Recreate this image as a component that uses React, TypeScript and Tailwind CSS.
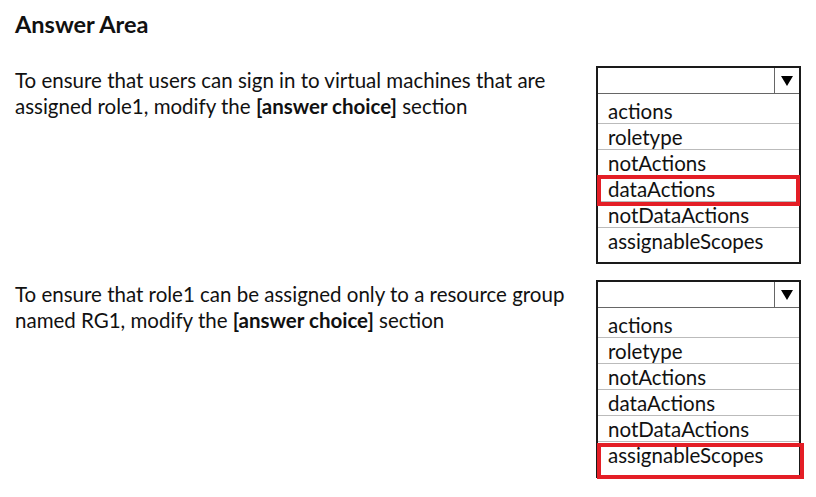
import React from "react";

const options = ["actions", "roletype", "notActions", "dataActions", "notDataActions", "assignableScopes"];

function Dropdown({ picked }: { picked: string }) {
  return (
    <div className="w-[205px] h-[198px] border-2 border-[#1a1a1a] bg-white shrink-0">
      {/* closed select header */}
      <div className="h-[26px] flex border-b border-[#666]">
        <div className="flex-1" />
        <div className="w-[25px] border-l border-[#666] flex items-center justify-center">
          <svg width="12" height="10" viewBox="0 0 12 10">
            <polygon points="0,0 12,0 6,10" fill="#000" />
          </svg>
        </div>
      </div>
      {/* option list */}
      <div className="pt-[4px]">
        {options.map((o, i) => {
          const last = i === options.length - 1;
          return (
            <div
              key={o}
              className={`relative h-[26px] pl-[10px] text-[20.5px] leading-[26px] ${
                last ? "" : "border-b border-[#bbb]"
              }`}
            >
              {o}
              {o === picked &&
                (last ? (
                  <div className="absolute left-[-1px] right-[-5px] top-[1px] h-[36px] border-4 border-[#e41e26]" />
                ) : (
                  <div className="absolute left-[-1px] right-[-1px] top-[-1px] h-[31px] border-4 border-[#e41e26]" />
                ))}
            </div>
          );
        })}
      </div>
    </div>
  );
}

function Question({ lines, picked }: { lines: [string, string]; picked: string }) {
  return (
    <div className="flex justify-between">
      <p className="pt-[1px] text-[20.5px] leading-[26px]">
        {lines[0]}
        <br />
        {lines[1]} <b>[answer choice]</b> section
      </p>
      <Dropdown picked={picked} />
    </div>
  );
}

export default function App() {
  return (
    <div
      className="w-[816px] h-[497px] bg-white text-[#111] pl-[15px] pr-[15px] pt-[10px] overflow-hidden"
      style={{ fontFamily: "Lato, 'Open Sans', sans-serif" }}
    >
      <h1 className="text-[23.5px] font-bold leading-[28px] mb-[28px]">Answer Area</h1>
      <div className="flex flex-col gap-[16px]">
        <Question
          lines={[
            "To ensure that users can sign in to virtual machines that are",
            "assigned role1, modify the",
          ]}
          picked="dataActions"
        />
        <Question
          lines={[
            "To ensure that role1 can be assigned only to a resource group",
            "named RG1, modify the",
          ]}
          picked="assignableScopes"
        />
      </div>
    </div>
  );
}
